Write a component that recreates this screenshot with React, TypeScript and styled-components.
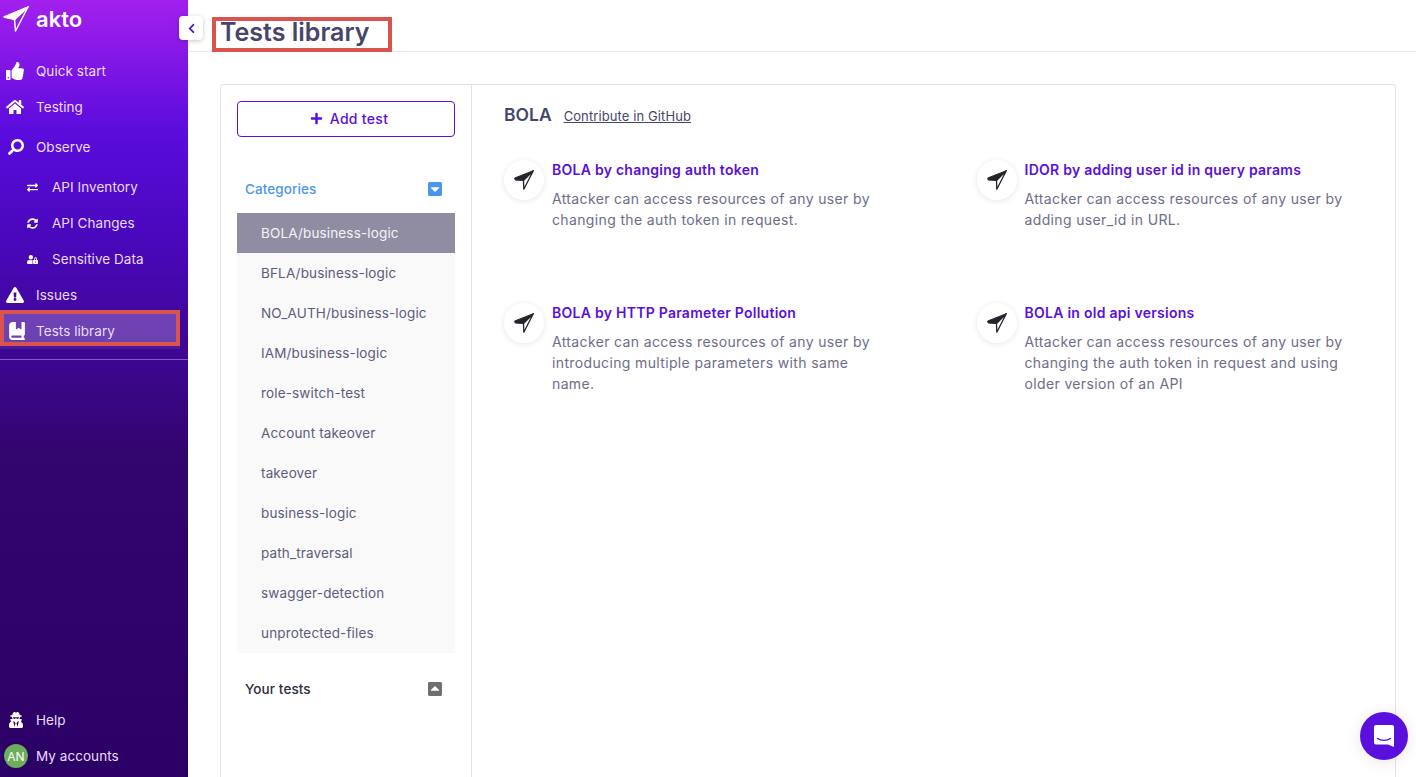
import React from 'react'
import styled, { createGlobalStyle } from 'styled-components'
import {
  FaThumbsUp,
  FaHome,
  FaSearch,
  FaExchangeAlt,
  FaSyncAlt,
  FaUserLock,
  FaExclamationTriangle,
  FaUserSecret,
  FaPlus,
  FaCaretSquareDown,
  FaCaretSquareUp,
  FaChevronLeft,
} from 'react-icons/fa'
import { FaBookBookmark } from 'react-icons/fa6'

const GlobalStyle = createGlobalStyle`
  html, body {
    margin: 0;
    height: 100%;
    overflow: hidden;
    background: #fff;
    font-family: Inter, "Open Sans", sans-serif;
  }
  * { box-sizing: border-box; }
`

const Shell = styled.div`
  display: flex;
  width: 100vw;
  height: 100vh;
  overflow: hidden;
  position: relative;
`

const Sidebar = styled.aside`
  width: 188px;
  flex: none;
  height: 100%;
  display: flex;
  flex-direction: column;
  background: linear-gradient(180deg, #a320ee 0%, #5a0cdc 17%, #4a08bd 30%, #33056f 58%, #2b0066 100%);
  color: #f0e6fb;
`

const Brand = styled.div`
  height: 53px;
  display: flex;
  align-items: center;
  padding: 0 0 15px 3px;
  gap: 7px;
  font-size: 22px;
  font-weight: 600;
  color: #fff;
`

const NavRow = styled.div<{ $sub?: boolean; $tall?: boolean }>`
  height: ${p => (p.$tall ? 44 : 36)}px;
  display: flex;
  align-items: center;
  padding-left: ${p => (p.$sub ? 24 : 6)}px;
  font-size: 13.5px;
  letter-spacing: 0.05px;
  color: #eadcfb;
`

const ActiveRow = styled(NavRow)`
  height: 36px;
  width: 180px;
  margin-top: -3px;
  padding: 6px 0 0 4px;
  border: 4px solid #d9534f;
  background: rgba(255, 255, 255, 0.24);
  box-shadow: 0 3px 0 rgba(255, 255, 255, 0.07);
`

const NavIcon = styled.span<{ $size?: number; $width?: number; $nudge?: number; $flip?: boolean }>`
  width: ${p => p.$width ?? 30}px;
  flex: none;
  display: flex;
  align-items: center;
  font-size: ${p => p.$size ?? 18}px;
  color: #fff;
  svg {
    margin-left: ${p => p.$nudge ?? 0}px;
    ${p => (p.$flip ? 'transform: scaleX(-1);' : '')}
  }
`

const Divider = styled.div`
  height: 1px;
  margin-top: 13px;
  background: rgba(255, 255, 255, 0.35);
`

const SidebarFoot = styled.div`
  margin-top: auto;
  padding-bottom: 3px;
`

const Avatar = styled.span`
  width: 24px;
  height: 24px;
  margin: 0 8px 0 -2px;
  flex: none;
  border-radius: 50%;
  background: #6cae5c;
  color: #fff;
  font-size: 12px;
  display: flex;
  align-items: center;
  justify-content: center;
`

const Collapse = styled.button`
  position: absolute;
  left: 179px;
  top: 16px;
  width: 24px;
  height: 24px;
  padding: 0;
  border: 0;
  border-radius: 4px;
  background: #fff;
  color: #4a0fc0;
  box-shadow: 0 1px 4px rgba(0, 0, 0, 0.22);
  display: flex;
  align-items: center;
  justify-content: center;
  font-size: 11px;
`

const Main = styled.main`
  flex: 1;
  min-width: 0;
  display: flex;
  flex-direction: column;
`

const Header = styled.header`
  height: 52px;
  flex: none;
  border-bottom: 1px solid #e8e8ec;
  padding: 17px 0 0 24px;
`

const Title = styled.h1`
  width: 180px;
  height: 35px;
  margin: 0;
  padding: 0 0 5px 4px;
  border: 4px solid #d9534f;
  display: flex;
  align-items: center;
  font-size: 25px;
  font-weight: 600;
  color: #47466a;
  white-space: nowrap;
`

const Content = styled.div`
  flex: 1;
  min-height: 0;
  padding: 32px 20px 0 32px;
  display: flex;
`

const Card = styled.section`
  flex: 1;
  display: flex;
  border: 1px solid #e2e2e6;
  border-bottom: 0;
  border-radius: 4px 4px 0 0;
`

const Left = styled.div`
  width: 251px;
  flex: none;
  border-right: 1px solid #e2e2e6;
  padding: 16px 16px 0 16px;
`

const AddButton = styled.button`
  width: 218px;
  height: 36px;
  padding: 0 0 2px 6px;
  border: 1px solid #5a0fdc;
  border-radius: 4px;
  background: #fff;
  color: #5a0fdc;
  font: 500 14px Inter, sans-serif;
  letter-spacing: 0.3px;
  display: flex;
  align-items: center;
  justify-content: center;
  gap: 7px;
  svg { font-size: 13px; }
`

const SectionHead = styled.div<{ $color: string }>`
  display: flex;
  align-items: center;
  justify-content: space-between;
  height: 24px;
  padding: 0 12px 0 8px;
  font-size: 13.5px;
  font-weight: 500;
  letter-spacing: 0.1px;
  color: ${p => p.$color};
  svg { font-size: 16px; }
`

const CategoriesHead = styled(SectionHead)`
  margin: 40px 0 12px;
`

const YourTestsHead = styled(SectionHead)`
  margin-top: 24px;
`

const CategoryList = styled.div`
  background: #f9f9f9;
`

const Category = styled.div<{ $active?: boolean }>`
  height: 40px;
  padding-left: 24px;
  display: flex;
  align-items: center;
  font-size: 13.5px;
  letter-spacing: 0.15px;
  color: ${p => (p.$active ? '#f4f4f7' : '#5d5c7c')};
  background: ${p => (p.$active ? '#908da3' : 'transparent')};
`

const Right = styled.div`
  flex: 1;
  min-width: 0;
  padding: 16px 0 0 32px;
`

const TopicRow = styled.div`
  display: flex;
  align-items: center;
  height: 26px;
  gap: 12px;
`

const Topic = styled.h2`
  margin: 0;
  font-size: 17.5px;
  font-weight: 600;
  color: #47466a;
`

const Contribute = styled.a`
  padding-top: 4px;
  font-size: 13px;
  letter-spacing: 0.1px;
  color: #47466a;
  text-decoration: underline;
`

const TestGrid = styled.div`
  margin-top: 19px;
  display: grid;
  grid-template-columns: 472.5px 1fr;
  grid-auto-rows: 143px;
`

const TestItem = styled.article`
  display: flex;
  gap: 8px;
`

const IconDisc = styled.div`
  width: 40px;
  height: 40px;
  flex: none;
  margin-top: 14px;
  border-radius: 50%;
  background: #fff;
  box-shadow: 0 1px 6px rgba(0, 0, 0, 0.1);
  display: flex;
  align-items: center;
  justify-content: center;
`

const TestBody = styled.div`
  padding-top: 13px;
  width: 325px;
`

const TestName = styled.h3`
  margin: 0 0 8px;
  font-size: 14px;
  line-height: 21px;
  font-weight: 600;
  letter-spacing: 0.26px;
  color: #5a0fdc;
  white-space: nowrap;
`

const TestText = styled.p`
  margin: 0;
  font-size: 14px;
  line-height: 21px;
  letter-spacing: 0.36px;
  color: #6e6d88;
`

const ChatBubble = styled.div`
  position: absolute;
  right: 8px;
  bottom: 17px;
  width: 48px;
  height: 48px;
  border-radius: 50%;
  background: #5a0fdc;
  box-shadow: 0 2px 16px rgba(0, 0, 0, 0.1);
  display: flex;
  align-items: center;
  justify-content: center;
`

const LogoMark = () => (
  <svg width="26" height="26" viewBox="0 0 26 26" strokeLinejoin="round">
    <path d="M25 1 L1 11 L11.5 13.5 Z" fill="#fff" stroke="#fff" strokeWidth="1.4" />
    <path d="M25 1 L11.5 13.5 L12.5 25 Z" fill="none" stroke="#fff" strokeWidth="1.5" />
  </svg>
)

const PlaneIcon = () => (
  <svg width="20" height="20" viewBox="0 0 20 20" strokeLinejoin="round">
    <path d="M19.3 0.7 L0.7 8 L1.2 10 L9.5 10.5 Z" fill="#23252b" stroke="#23252b" strokeWidth="1" />
    <path d="M19.3 0.7 L9.5 10.5 L9.8 19.2 Z" fill="#fff" stroke="#23252b" strokeWidth="1.3" />
  </svg>
)

const ChatIcon = () => (
  <svg width="24" height="26" viewBox="0 0 24 26">
    <path d="M4 2 H20 A2 2 0 0 1 22 4 V24 L16 21.5 H4 A2 2 0 0 1 2 19.5 V4 A2 2 0 0 1 4 2 Z" fill="#fff" />
    <path d="M5.5 15.5 C9 18 15 18 18.5 15.5" fill="none" stroke="#5a0fdc" strokeWidth="1.4" strokeLinecap="round" />
  </svg>
)

const categories = [
  'BOLA/business-logic',
  'BFLA/business-logic',
  'NO_AUTH/business-logic',
  'IAM/business-logic',
  'role-switch-test',
  'Account takeover',
  'takeover',
  'business-logic',
  'path_traversal',
  'swagger-detection',
  'unprotected-files',
]

const tests = [
  {
    name: 'BOLA by changing auth token',
    text: 'Attacker can access resources of any user by changing the auth token in request.',
  },
  {
    name: 'IDOR by adding user id in query params',
    text: 'Attacker can access resources of any user by adding user_id in URL.',
  },
  {
    name: 'BOLA by HTTP Parameter Pollution',
    text: 'Attacker can access resources of any user by introducing multiple parameters with same name.',
  },
  {
    name: 'BOLA in old api versions',
    text: 'Attacker can access resources of any user by changing the auth token in request and using older version of an API',
  },
]

const App = () => {
  return (
    <Shell>
      <GlobalStyle />
      <Sidebar>
        <Brand>
          <LogoMark />
          akto
        </Brand>
        <NavRow>
          <NavIcon><FaThumbsUp /></NavIcon>
          Quick start
        </NavRow>
        <NavRow>
          <NavIcon><FaHome /></NavIcon>
          Testing
        </NavRow>
        <NavRow $tall>
          <NavIcon $size={16} $nudge={2} $flip><FaSearch /></NavIcon>
          Observe
        </NavRow>
        <NavRow $sub>
          <NavIcon $size={11} $width={28} $nudge={3}><FaExchangeAlt /></NavIcon>
          API Inventory
        </NavRow>
        <NavRow $sub>
          <NavIcon $size={11} $width={28} $nudge={3}><FaSyncAlt /></NavIcon>
          API Changes
        </NavRow>
        <NavRow $sub>
          <NavIcon $size={11} $width={28} $nudge={3}><FaUserLock /></NavIcon>
          Sensitive Data
        </NavRow>
        <NavRow>
          <NavIcon><FaExclamationTriangle /></NavIcon>
          Issues
        </NavRow>
        <ActiveRow>
          <NavIcon $width={28}><FaBookBookmark /></NavIcon>
          Tests library
        </ActiveRow>
        <Divider />
        <SidebarFoot>
          <NavRow>
            <NavIcon $size={16} $nudge={2}><FaUserSecret /></NavIcon>
            Help
          </NavRow>
          <NavRow>
            <Avatar>AN</Avatar>
            My accounts
          </NavRow>
        </SidebarFoot>
      </Sidebar>
      <Collapse aria-label="Collapse"><FaChevronLeft /></Collapse>
      <Main>
        <Header>
          <Title>Tests library</Title>
        </Header>
        <Content>
          <Card>
            <Left>
              <AddButton><FaPlus />Add test</AddButton>
              <CategoriesHead $color="#4a96ec">
                Categories
                <FaCaretSquareDown />
              </CategoriesHead>
              <CategoryList>
                {categories.map((c, i) => (
                  <Category key={c} $active={i === 0}>{c}</Category>
                ))}
              </CategoryList>
              <YourTestsHead $color="#2c2c3a">
                Your tests
                <FaCaretSquareUp color="#6f6f6f" />
              </YourTestsHead>
            </Left>
            <Right>
              <TopicRow>
                <Topic>BOLA</Topic>
                <Contribute>Contribute in GitHub</Contribute>
              </TopicRow>
              <TestGrid>
                {tests.map(t => (
                  <TestItem key={t.name}>
                    <IconDisc><PlaneIcon /></IconDisc>
                    <TestBody>
                      <TestName>{t.name}</TestName>
                      <TestText>{t.text}</TestText>
                    </TestBody>
                  </TestItem>
                ))}
              </TestGrid>
            </Right>
          </Card>
        </Content>
      </Main>
      <ChatBubble><ChatIcon /></ChatBubble>
    </Shell>
  )
}

export default App
